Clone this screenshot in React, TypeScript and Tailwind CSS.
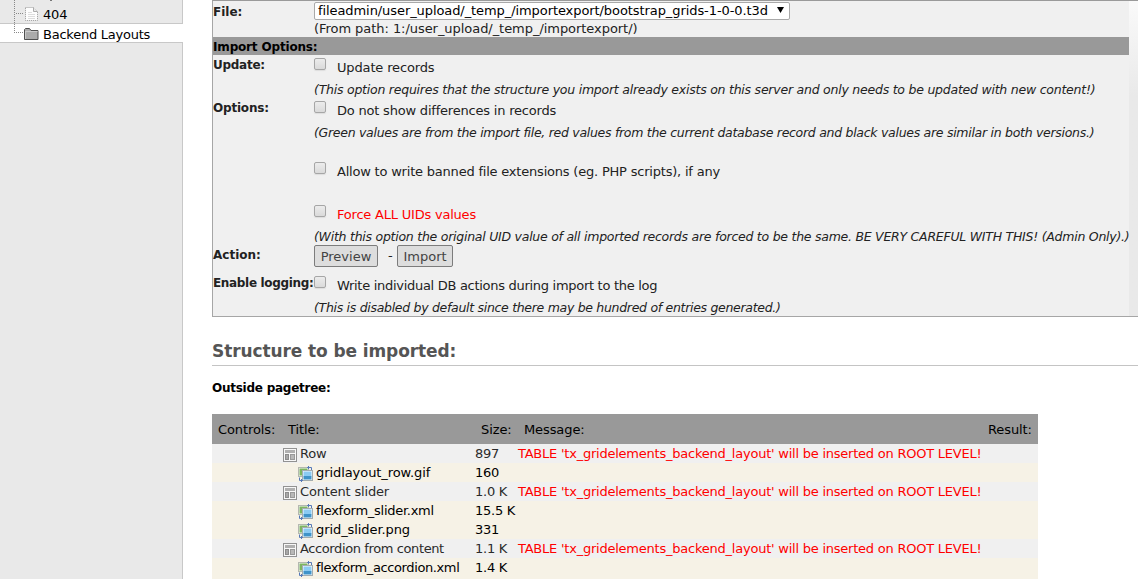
import type { ReactNode } from 'react';

function Check() {
  return (
    <span
      role="checkbox"
      aria-checked="false"
      className="mt-[3px] mr-[11px] h-3 w-3 shrink-0 rounded-[2px] border border-[#a6a6a6] bg-gradient-to-b from-[#ececec] to-[#dadada] shadow-[0_1px_1px_#dddddd]"
    />
  );
}

function Label({ children, className = 'pt-[2px]' }: { children?: ReactNode; className?: string }) {
  return (
    <div className={`w-[101px] shrink-0 text-[12px] leading-4 font-bold text-[#222222] ${className}`}>{children}</div>
  );
}

function Option({ text, textClass, note, noteClass }: { text: string; textClass: string; note?: string; noteClass?: string }) {
  return (
    <div className="h-[43px]">
      <div className="flex h-[27px]">
        <Check />
        <span className={`mt-[5px] leading-4 ${textClass}`}>{text}</span>
      </div>
      {note && <div className={`text-[12.5px] leading-4 italic ${noteClass}`}>{note}</div>}
    </div>
  );
}

function LayoutIcon() {
  return (
    <svg className="h-[14px] w-[14px] shrink-0" viewBox="0 0 14 14" shapeRendering="crispEdges">
      <rect width="14" height="14" fill="#929292" />
      <rect x="1" y="1" width="12" height="12" fill="#f7f7f7" />
      <rect x="2" y="2" width="10" height="3" fill="#b0b0b0" />
      <rect x="2" y="6" width="4" height="6" fill="#8c8c8c" />
      <rect x="3" y="7" width="2" height="4" fill="#a8a8a8" />
      <rect x="7" y="6" width="5" height="6" fill="#999999" />
      <rect x="8" y="7" width="3" height="4" fill="#b8b8b8" />
    </svg>
  );
}

function ImagesIcon() {
  return (
    <svg className="h-4 w-4 shrink-0" viewBox="0 0 16 16">
      <rect x=".5" y="1.5" width="10" height="9" fill="#f5f7f2" stroke="#b4b8b0" />
      <rect x="1.5" y="2.5" width="8" height="7" fill="#7db560" />
      <rect x="4.5" y="4.5" width="10" height="10" fill="#f4fafe" stroke="#a3acb0" />
      <rect x="5.5" y="5.5" width="8" height="5" fill="#8bcbf3" />
      <rect x="5.5" y="10" width="8" height="3.5" fill="#3f93c9" />
      <path d="M9.5 1.5h4v2.5M11 0 9.5 1.5 11 3" fill="none" stroke="#5578b8" />
      <path d="M1.5 11.5v3h3M3 13l1.5 1.5L3 16" fill="none" stroke="#5578b8" />
    </svg>
  );
}

function PageIcon() {
  return (
    <svg className="h-[14px] w-[13px] shrink-0" viewBox="0 0 13 14">
      <path d="M.5.5h8l4 4v9H.5z" fill="#fdfdfd" stroke="#999999" strokeDasharray="1 1" />
      <path d="M8.5.5v4h4" fill="#e8e8e8" stroke="#aaaaaa" />
      <path d="M3 5.5h4M3 7.5h7M3 9.5h7M3 11.5h7" stroke="#dddddd" />
    </svg>
  );
}

function FolderIcon() {
  return (
    <svg className="h-3 w-[15px] shrink-0" viewBox="0 0 15 12">
      <path d="M.5 11.5v-10l1-1h4l1.5 2h7v9z" fill="#aaaaaa" stroke="#4f4f4f" />
      <path d="M1.5 3.5h12M1.5 3v8" stroke="#c9c9c9" />
    </svg>
  );
}

const message = "TABLE 'tx_gridelements_backend_layout' will be inserted on ROOT LEVEL!";

const rows = [
  { title: 'Row', size: '897', record: true, cls: 'tracking-[-0.2px]' },
  { title: 'gridlayout_row.gif', size: '160', record: false, cls: 'tracking-[-0.07px]' },
  { title: 'Content slider', size: '1.0 K', record: true, cls: 'tracking-[-0.17px]' },
  { title: 'flexform_slider.xml', size: '15.5 K', record: false, cls: 'tracking-[-0.27px]' },
  { title: 'grid_slider.png', size: '331', record: false, cls: 'tracking-[-0.08px]' },
  { title: 'Accordion from content', size: '1.1 K', record: true, cls: 'tracking-[-0.39px]' },
  { title: 'flexform_accordion.xml', size: '1.4 K', record: false, cls: 'tracking-[-0.39px]' },
];

function Sidebar() {
  return (
    <aside className="relative flex w-[183px] shrink-0 flex-col bg-[#e9e9e9]">
      <div className="flex h-6 items-start border-r border-b border-[#c8c8c8] pt-[7px] pl-[25px]">
        <PageIcon />
        <span className="ml-[5px] leading-4 tracking-[-0.2px]">404</span>
      </div>
      <div className="flex h-[18px] items-start bg-white pt-[3px] pl-6">
        <span className="mt-px flex">
          <FolderIcon />
        </span>
        <span className="ml-1 leading-4 tracking-[-0.24px]">Backend Layouts</span>
      </div>
      <div className="grow border-t border-r border-[#c8c8c8]" />
      <svg className="absolute top-0 left-[14px] h-[34px] w-10" viewBox="0 0 40 34">
        <path d="M.5 0v33M2 13.5h8M2 32.5h8" fill="none" stroke="#888888" strokeDasharray="1 1" />
        <path d="M36 .5h2" stroke="#777777" />
      </svg>
    </aside>
  );
}

function ImportForm() {
  return (
    <section className="flex h-[317px] border-t border-b border-l border-[#a6a6a6] border-t-[#9a9a9a] bg-[#f0f0f0]">
      <div className="w-[916px] shrink-0 whitespace-nowrap text-[#222222]">
        <div className="flex h-9">
          <Label className="pt-[3px]">File:</Label>
          <div className="pt-px">
            <div className="flex h-[18px] w-[476px] items-center justify-between rounded-[2px] border border-[#a9a9a9] bg-white pr-[5px] pl-[3px] text-black">
              <span className="leading-4 tracking-[-0.08px]">fileadmin/user_upload/_temp_/importexport/bootstrap_grids-1-0-0.t3d</span>
              <svg className="mb-[2px] h-[6px] w-[7px]" viewBox="0 0 7 6">
                <path d="M0 0h7L3.5 6z" fill="#000000" />
              </svg>
            </div>
            <div className="pt-px leading-4 tracking-[-0.05px]">(From path: 1:/user_upload/_temp_/importexport/)</div>
          </div>
        </div>
        <div className="h-[18px] bg-[#999999] pt-px text-[12px] leading-[18px] font-bold tracking-[-0.17px] text-black">Import Options:</div>
        <div className="flex">
          <Label className="pt-[2px] tracking-[-0.27px]">Update:</Label>
          <Option
            text="Update records"
            textClass="tracking-[-0.15px]"
            note="(This option requires that the structure you import already exists on this server and only needs to be updated with new content!)"
            noteClass="tracking-[-0.233px]"
          />
        </div>
        <div className="flex">
          <Label className="pt-[2px] tracking-[-0.2px]">Options:</Label>
          <div>
            <Option
              text="Do not show differences in records"
              textClass="tracking-[-0.2px]"
              note="(Green values are from the import file, red values from the current database record and black values are similar in both versions.)"
              noteClass="tracking-[-0.286px]"
            />
            <div className="pt-[18px]">
              <Option text="Allow to write banned file extensions (eg. PHP scripts), if any" textClass="tracking-[-0.205px]" />
            </div>
            <Option
              text="Force ALL UIDs values"
              textClass="tracking-[-0.21px] text-[#ff0000]"
              note="(With this option the original UID value of all imported records are forced to be the same. BE VERY CAREFUL WITH THIS! (Admin Only).)"
              noteClass="tracking-[-0.252px]"
            />
          </div>
        </div>
        <div className="flex h-7">
          <Label>Action:</Label>
          <button className="h-[22px] w-[64px] rounded-[2px] border border-[#7c7c7c] bg-[#dddddd] pt-px leading-[19px] text-[#434343]">Preview</button>
          <span className="w-[19px] pt-[3px] pl-[10px] leading-4">-</span>
          <button className="h-[22px] w-[56px] rounded-[2px] border border-[#7c7c7c] bg-[#dddddd] pt-px leading-[19px] text-[#434343]">Import</button>
        </div>
        <div className="flex">
          <Label className="pt-[2px] tracking-[-0.33px]">Enable logging:</Label>
          <Option
            text="Write individual DB actions during import to the log"
            textClass="tracking-[-0.29px]"
            note="(This is disabled by default since there may be hundred of entries generated.)"
            noteClass="tracking-[-0.3px]"
          />
        </div>
      </div>
      <div className="grow bg-gradient-to-b from-[#fafafa] to-[#e9e9e9] to-30%" />
    </section>
  );
}

function ImportTable() {
  const columns = 'grid grid-cols-[70px_193px_43px_464px_56px] whitespace-nowrap';
  return (
    <div className="mt-[18px] w-[826px]">
      <div className={`${columns} h-[30px] bg-[#999999] pt-px leading-[30px] tracking-[-0.1px] text-black`}>
        <span className="pl-[6px]">Controls:</span>
        <span className="pl-[6px]">Title:</span>
        <span className="pl-[6px]">Size:</span>
        <span className="pl-[6px]">Message:</span>
        <span className="pl-[6px]">Result:</span>
      </div>
      {rows.map((row) => (
        <div key={row.title} className={`${columns} h-[19px] leading-[19px] ${row.record ? 'bg-[#f0f0f0] text-[#2b2b2b]' : 'bg-[#f6f2e6] text-black'}`}>
          <span />
          <span className={`flex ${row.record ? 'pl-px' : 'pl-4'}`}>
            <span className={`flex ${row.record ? 'mr-[3px] pt-1' : 'mr-[2px] pt-[3px]'}`}>{row.record ? <LayoutIcon /> : <ImagesIcon />}</span>
            <span className={row.cls}>{row.title}</span>
          </span>
          <span className="tracking-[-0.25px]">{row.size}</span>
          <span className="tracking-[-0.23px] text-[#ff0000]">{row.record ? message : ''}</span>
          <span />
        </div>
      ))}
      <div className="h-[2px] bg-[#f6f2e6]" />
    </div>
  );
}

export default function App() {
  return (
    <div className="flex h-[579px] w-[1138px] overflow-hidden bg-white font-['DejaVu_Sans',Verdana,sans-serif] text-[13px] text-black">
      <Sidebar />
      <main className="ml-[29px] w-[926px] shrink-0">
        <ImportForm />
        <h2 className="mt-[24px] h-[25px] border-b border-[#c4c4c4] text-[17px] leading-[20px] font-bold tracking-[-0.1px] text-[#555555]">Structure to be imported:</h2>
        <h4 className="mt-[14px] h-4 text-[12px] leading-4 font-bold tracking-[-0.25px]">Outside pagetree:</h4>
        <ImportTable />
      </main>
    </div>
  );
}
